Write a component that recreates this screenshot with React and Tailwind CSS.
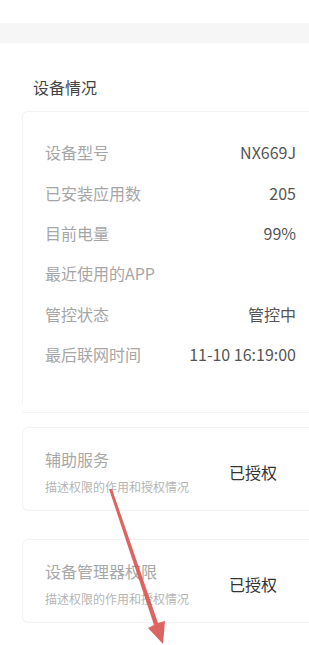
export default function App() {
  const rows = [
    { label: '设备型号', value: 'NX669J' },
    { label: '已安装应用数', value: '205' },
    { label: '目前电量', value: '99%' },
    { label: '最近使用的APP', value: '' },
    { label: '管控状态', value: '管控中' },
    { label: '最后联网时间', value: '11-10 16:19:00' },
  ];

  const perms = [
    { title: '辅助服务', desc: '描述权限的作用和授权情况' },
    { title: '设备管理器权限', desc: '描述权限的作用和授权情况' },
  ];

  return (
    <div
      className="relative w-[309px] h-[645px] overflow-hidden bg-white"
      style={{ fontFamily: '"Noto Sans CJK SC", "Liberation Sans", sans-serif' }}
    >
      <div className="h-[24px] bg-white border-b border-[#f6f6f6]" />
      <div className="h-[19px] bg-[#f6f6f6]" />

      <div className="pl-[22px]">
        <div className="h-[68px] flex items-end pb-[16px] pl-[11px]">
          <span className="text-[16px] leading-none text-[#444]">设备情况</span>
        </div>

        <div className="border-t border-l border-[#f2f2f2] rounded-tl-[6px] pt-[20px] pb-[30px] pl-[22px] pr-[13px]">
          {rows.map((r) => (
            <div key={r.label} className="h-[40.4px] flex items-center justify-between">
              <span className="text-[16px] leading-none text-[#a6a6a6]">{r.label}</span>
              <span className="text-[16px] leading-none text-[#555]">{r.value}</span>
            </div>
          ))}
        </div>

        <div className="h-[15px] border-t border-[#f5f5f5] mt-[8px]" />

        <div className="flex flex-col gap-[28px]">
          {perms.map((p) => (
            <div
              key={p.title}
              className="h-[84px] border border-r-0 border-[#f2f2f2] rounded-l-[6px] flex items-center pl-[22px] pt-[6px]"
            >
              <div className="w-[184px] flex flex-col gap-[14px]">
                <span className="text-[16px] leading-none text-[#a8a8a8]">{p.title}</span>
                <span className="text-[12px] leading-none text-[#b5b5b5] whitespace-nowrap">{p.desc}</span>
              </div>
              <span className="text-[16px] leading-none text-[#333]">已授权</span>
            </div>
          ))}
        </div>
      </div>

      <svg className="absolute left-0 top-0 pointer-events-none" width="309" height="645" viewBox="0 0 309 645">
        <polygon points="109,489 112,489 158,623 165,621 163,644 148,628 154,625" fill="#d9534f" opacity="0.9" />
      </svg>
    </div>
  );
}
